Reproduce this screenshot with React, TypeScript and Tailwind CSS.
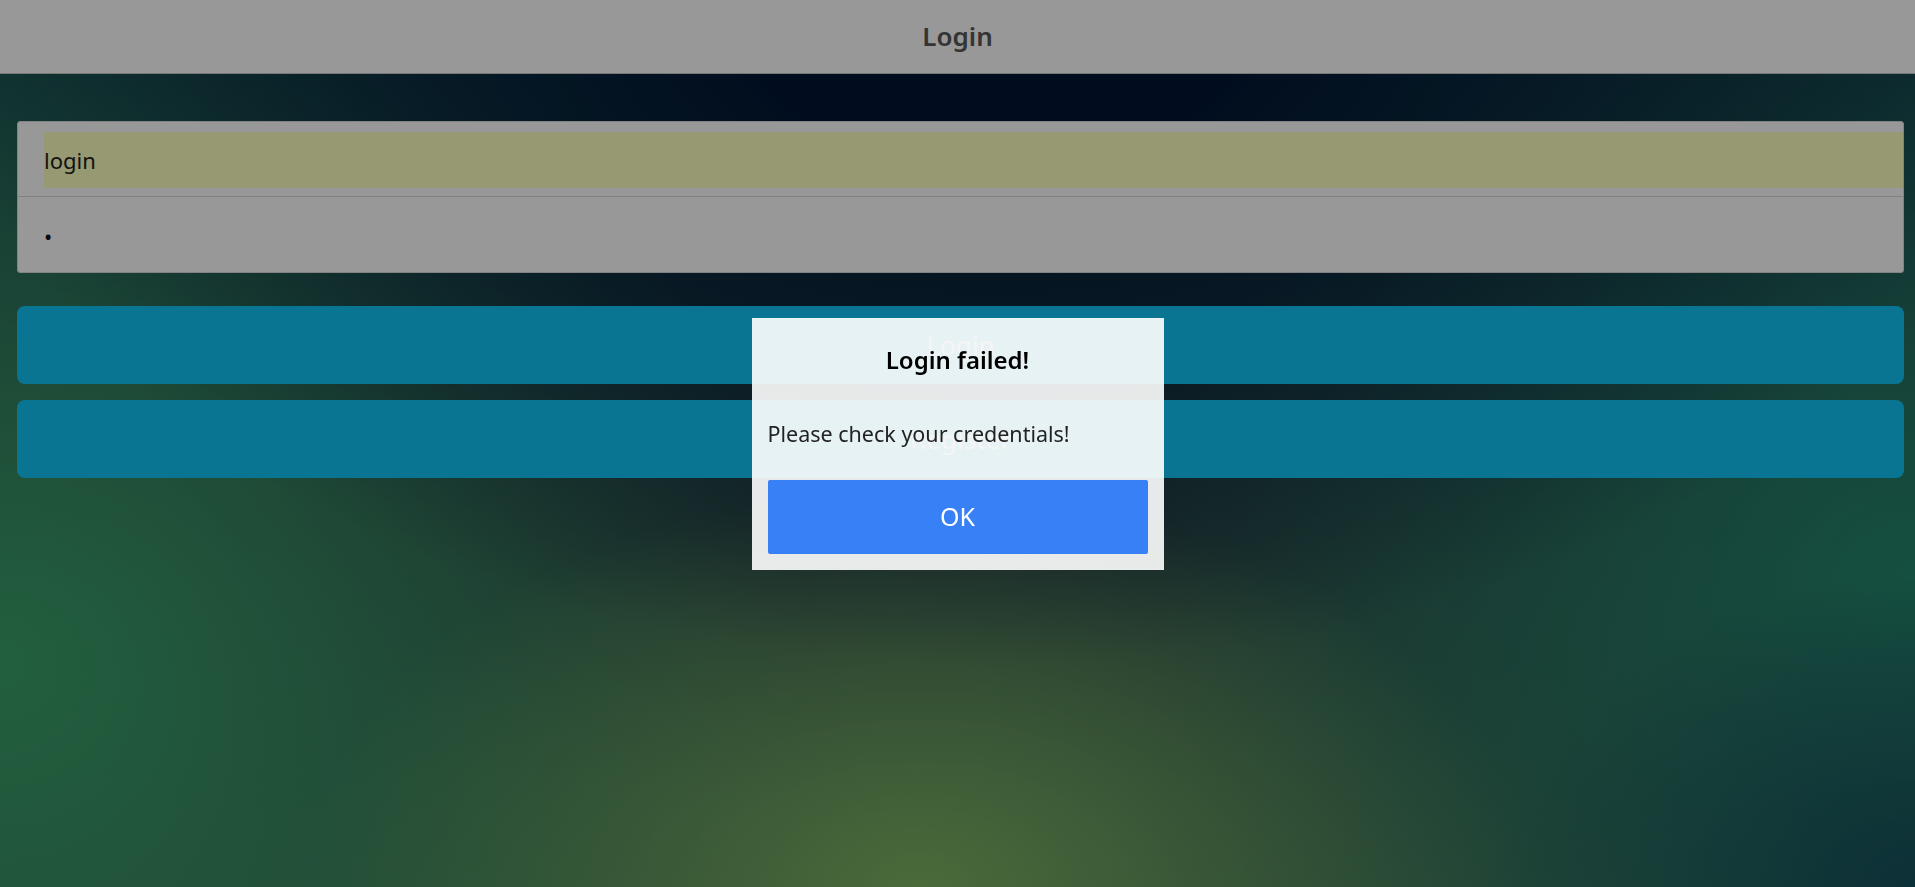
import React from 'react';

const font = "font-['Noto_Sans','Open_Sans',sans-serif]";

const LoginPage: React.FC = () => {
  return (
    <div className={`relative h-screen w-full overflow-hidden ${font} bg-[radial-gradient(ellipse_55%_75%_at_52%_0%,#021734_0%,#021734_25%,transparent_100%),radial-gradient(ellipse_32%_45%_at_48%_100%,#7db262_0%,transparent_100%),radial-gradient(ellipse_42%_80%_at_0%_75%,#39a069_0%,transparent_100%),radial-gradient(ellipse_22%_35%_at_100%_100%,#15505c_0%,transparent_100%),radial-gradient(ellipse_40%_65%_at_100%_65%,#23856c_0%,transparent_100%),linear-gradient(180deg,#144a50_0%,#2f4d49_60%,#3a6a55_100%)]`}>
      <header className="flex h-[74px] items-center justify-center border-b border-[#c8c8c8] bg-[#fdfdfd]">
        <h1 className="text-[26px] font-semibold text-[#575757]">Login</h1>
      </header>

      <main className="pl-[17px] pr-[11px] pt-[47px]">
        <div className="overflow-hidden rounded-[3px] border border-[#d9d9d9] bg-[#fdfdfd]">
          <div className="border-b border-[#d5d5d5] pl-[26px] pt-[10px] pb-[8px]">
            <input
              readOnly
              value="login"
              className="block h-[56px] w-full bg-[#faffbd] text-[22px] text-[#222] outline-none"
            />
          </div>
          <div className="pl-[26px] pt-[11px] pb-[8px]">
            <input
              readOnly
              type="password"
              value="1"
              className="block h-[56px] w-full bg-transparent text-[22px] text-[#111] outline-none"
            />
          </div>
        </div>

        <div className="mt-[33px] flex flex-col gap-4">
          <button className="h-[78px] w-full rounded-lg bg-[#12c3f5] text-[26px] text-white">Login</button>
          <button className="h-[78px] w-full rounded-lg bg-[#12c3f5] text-[26px] text-white">Register</button>
        </div>
      </main>

      <div className="fixed inset-0 flex items-center justify-center bg-black/40">
        <div className="w-[412px] bg-white/90 pt-[26px]">
          <h2 className="text-center text-[24px] leading-[32px] font-semibold text-black">Login failed!</h2>
          <p className="mt-[43px] px-4 text-[21.5px] leading-[30px] text-[#222]">Please check your credentials!</p>
          <div className="mx-4 mt-[31px] mb-4">
            <button className="h-[74px] w-full rounded-[2px] bg-[#3880f5] text-[25px] text-white">OK</button>
          </div>
        </div>
      </div>
    </div>
  );
};

export default LoginPage;
